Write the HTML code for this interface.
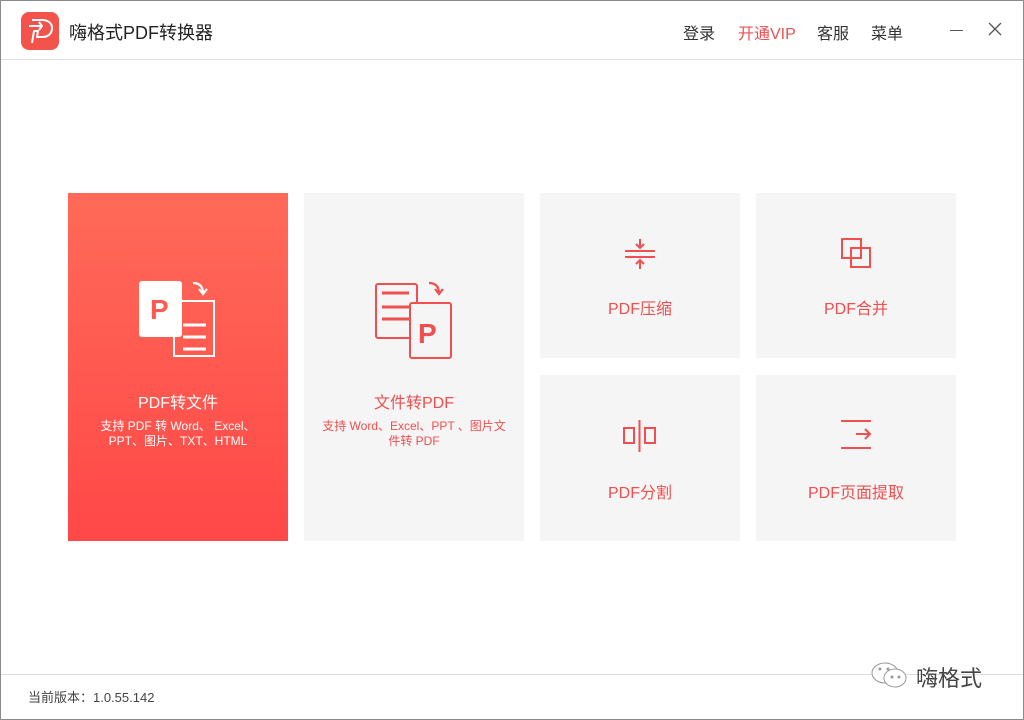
<!DOCTYPE html><html><head><meta charset="utf-8"><style>
*{margin:0;padding:0;box-sizing:border-box}
body{width:1024px;height:720px;background:#fff;font-family:"Liberation Sans","Noto Sans CJK SC",sans-serif;position:relative;overflow:hidden}
.a{position:absolute}
.card{position:absolute;background:#f5f5f5;text-align:center;color:#ef4f4f}
.t{position:absolute;left:0;right:0;font-size:16px}
.s{position:absolute;left:0;right:0;font-size:12px;line-height:15px}
</style></head><body>
<div class="a" style="left:0;top:0;width:1024px;height:720px;border:1px solid #8a8a8a;z-index:5;pointer-events:none"></div>
<div class="a" style="left:21px;top:12px;width:38px;height:38px;border-radius:8px;background:#f4534c"></div>
<svg class="a" style="left:21px;top:12px" width="38" height="38" viewBox="0 0 38 38" fill="none" stroke="#fff" stroke-width="2" stroke-linejoin="round"><path d="M11 31 L13 19 L17 19 L16 25 L21 25 C28 25 31 21 31 16 C31 11 27 8 21 8 L11 8"/><path d="M8 14 L21 14 L18 10 M21 14 L18 18"/></svg>
<div class="a" style="left:69px;top:19px;font-size:18px;color:#222">嗨格式PDF转换器</div>
<div class="a" style="left:683px;top:20px;font-size:16px;color:#333">登录</div>
<div class="a" style="left:738px;top:20px;font-size:16px;color:#ef4f4f">开通VIP</div>
<div class="a" style="left:817px;top:20px;font-size:16px;color:#333">客服</div>
<div class="a" style="left:871px;top:20px;font-size:16px;color:#333">菜单</div>
<div class="a" style="left:950px;top:30px;width:13px;height:1px;background:#555"></div>
<svg class="a" style="left:988px;top:22px" width="14" height="14" stroke="#555" stroke-width="1.3"><path d="M1 1L13 13M13 1L1 13"/></svg>
<div class="a" style="left:0;top:59px;width:1024px;height:1px;background:#ddd"></div>

<div class="card" style="left:68px;top:193px;width:220px;height:348px;background:linear-gradient(#ff6a58,#ff4848);color:#fff">
<svg class="a" style="left:70px;top:86px" width="80" height="80" viewBox="0 0 80 80"><rect x="36" y="22" width="40" height="55" fill="none" stroke="#fff" stroke-width="2"/><path d="M45 46H68M45 58H68M45 70H68" stroke="#fff" stroke-width="3"/><rect x="1" y="2" width="43" height="56" rx="3" fill="#fff"/><text x="12" y="40" font-size="28" font-weight="bold" fill="#ff5a50" font-family="Liberation Sans">P</text><path d="M55 4 Q64 4 65 13 M61 10 L65 15 L69 10" stroke="#fff" stroke-width="2.2" fill="none"/></svg>
<div class="t" style="top:196px">PDF转文件</div>
<div class="s" style="top:226px">支持 PDF 转 Word、 Excel、<br>PPT、图片、TXT、HTML</div></div>

<div class="card" style="left:304px;top:193px;width:220px;height:348px">
<svg class="a" style="left:70px;top:86px" width="80" height="80" viewBox="0 0 80 80" fill="none" stroke="#ef4f4f"><rect x="2" y="5" width="41" height="54" rx="2" fill="#f5f5f5" stroke-width="2"/><path d="M8 14H35M8 28H35M8 40H35" stroke-width="3"/><rect x="36" y="24" width="41" height="55" rx="2" fill="#f5f5f5" stroke-width="2"/><text x="44" y="64" font-size="28" font-weight="bold" fill="#ef4f4f" stroke="none" font-family="Liberation Sans">P</text><path d="M55 4 Q64 4 65 13 M61 10 L65 15 L69 10" stroke-width="2.2"/></svg>
<div class="t" style="top:196px">文件转PDF</div>
<div class="s" style="top:226px">支持 Word、Excel、PPT 、图片文<br>件转 PDF</div></div>

<div class="card" style="left:540px;top:193px;width:200px;height:165px">
<svg class="a" style="left:84px;top:45px" width="32" height="32" viewBox="0 0 32 32" stroke="#ef4f4f" stroke-width="2" fill="none"><path d="M1 13H31M1 19H31M16 1V10M12 6L16 10L20 6M16 31V22M12 26L16 22L20 26"/></svg>
<div class="t" style="top:102px">PDF压缩</div></div>
<div class="card" style="left:756px;top:193px;width:200px;height:165px">
<svg class="a" style="left:84px;top:44px" width="34" height="34" viewBox="0 0 34 34" stroke="#ef4f4f" stroke-width="2" fill="none"><rect x="2" y="2" width="19" height="19"/><rect x="11" y="11" width="19" height="19"/></svg>
<div class="t" style="top:102px">PDF合并</div></div>
<div class="card" style="left:540px;top:375px;width:200px;height:166px">
<svg class="a" style="left:82px;top:44px" width="36" height="34" viewBox="0 0 36 34" stroke="#ef4f4f" stroke-width="2" fill="none"><rect x="2" y="9" width="10" height="15"/><rect x="23" y="9" width="10" height="15"/><path d="M17.5 1V33"/></svg>
<div class="t" style="top:104px">PDF分割</div></div>
<div class="card" style="left:756px;top:375px;width:200px;height:166px">
<svg class="a" style="left:84px;top:44px" width="34" height="32" viewBox="0 0 34 32" stroke="#ef4f4f" stroke-width="2" fill="none"><path d="M1 2H31M1 29H31M16 15H30M25 10L30 15L25 20"/></svg>
<div class="t" style="top:104px">PDF页面提取</div></div>

<div class="a" style="left:0;top:674px;width:1024px;height:1px;background:#ddd"></div>
<div class="a" style="left:28px;top:687px;font-size:13px;color:#444">当前版本：1.0.55.142</div>
<svg class="a" style="left:868px;top:660px" width="44" height="30" stroke="#999" fill="#fff" stroke-width="1"><ellipse cx="17" cy="13" rx="13" ry="10"/><ellipse cx="27" cy="18" rx="11" ry="9"/><circle cx="12" cy="9" r="1" fill="#999"/><circle cx="20" cy="9" r="1" fill="#999"/><circle cx="24" cy="17" r="1" fill="#999"/><circle cx="31" cy="17" r="1" fill="#999"/></svg>
<div class="a" style="left:916px;top:661px;font-size:22px;color:#444">嗨格式</div>
</body></html>
